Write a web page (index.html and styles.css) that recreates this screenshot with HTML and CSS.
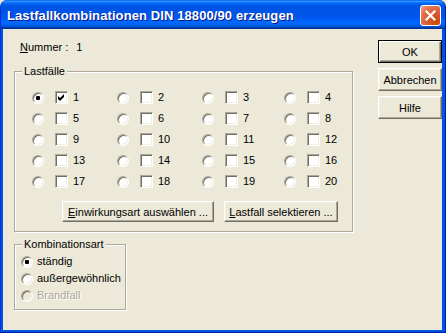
FILE: index.html
```html
<!DOCTYPE html>
<html lang="de">
<head>
    <meta charset="UTF-8">
    <title>Lastfallkombinationen DIN 18800/90 erzeugen</title>
    <link rel="stylesheet" href="styles.css">
</head>
<body>
    <div class="window">
        <div class="titlebar">
            <span class="title">Lastfallkombinationen DIN 18800/90 erzeugen</span>
            <span class="close">
                <svg width="11" height="11" viewBox="0 0 11 11">
                    <path d="M1.5 1.5 L9.5 9.5 M9.5 1.5 L1.5 9.5" stroke="#fff" stroke-width="2.2" stroke-linecap="square"/>
                </svg>
            </span>
        </div>

        <div class="client">
            <div class="main">
                <div class="nummer">
                    <span><u>N</u>ummer :</span>
                    <span class="nummer-value">1</span>
                </div>

                <div class="group lastfaelle">
                    <span class="group-title">Lastfälle</span>
                    <div class="lf-grid" id="lfGrid">
                        <!-- cells are filled in by the script below -->
                    </div>
                    <div class="lf-buttons">
                        <span class="btn btn-einw"><u>E</u>inwirkungsart auswählen ...</span>
                        <span class="btn btn-sel"><u>L</u>astfall selektieren ...</span>
                    </div>
                </div>

                <div class="group kombi">
                    <span class="group-title">Kombinationsart</span>
                    <div class="kombi-item"><span class="radio checked"></span>ständig</div>
                    <div class="kombi-item"><span class="radio"></span>außergewöhnlich</div>
                    <div class="kombi-item disabled"><span class="radio"></span>Brandfall</div>
                </div>
            </div>

            <div class="side">
                <span class="btn btn-default">OK</span>
                <span class="btn">Abbrechen</span>
                <span class="btn">Hilfe</span>
            </div>
        </div>
    </div>

    <script>
        var grid = document.getElementById("lfGrid");
        for (var i = 1; i <= 20; i++) {
            var cell = document.createElement("div");
            cell.className = "lf-cell";

            var radio = document.createElement("span");
            radio.className = i === 1 ? "radio checked" : "radio";

            var box = document.createElement("span");
            box.className = "check";
            if (i === 1) {
                box.innerHTML = '<svg width="7" height="7" viewBox="0 0 7 7"><path d="M0 2 L2 4 L6 0 L6 3 L2 7 L0 5 Z" fill="#000"/></svg>';
            }

            var label = document.createElement("span");
            label.className = "lf-num";
            label.textContent = i;

            cell.appendChild(radio);
            cell.appendChild(box);
            cell.appendChild(label);
            grid.appendChild(cell);
        }
    </script>
</body>
</html>
```

FILE: styles.css
```css
body {
    margin: 0;
    background-color: #ECE9D8;
    font-family: "Liberation Sans", Arial, sans-serif;
    font-size: 11px;
    color: #000;
}

.window {
    width: 446px;
    height: 333px;
    box-sizing: border-box;
    background-color: #0054E3;
    border-left: 1px solid #0831D9;
    border-right: 1px solid #001EA0;
    border-bottom: 1px solid #001EA0;
    border-radius: 7px 7px 0 0;
    display: flex;
    flex-direction: column;
    overflow: hidden;
}

/* title bar */
.titlebar {
    height: 29px;
    flex-shrink: 0;
    display: flex;
    align-items: center;
    justify-content: space-between;
    padding: 0 4px 0 6px;
    background: linear-gradient(to bottom, #0058EE 0%, #3593FF 4%, #288EFF 6%, #127DFF 8%, #036FFC 10%, #0262EE 14%, #0057E5 20%, #0054E3 24%, #0055EB 56%, #005BF5 66%, #026AFE 76%, #0062EF 86%, #0052D6 92%, #0040AB 94%, #003092 100%);
}

.title {
    color: #fff;
    font-weight: bold;
    font-size: 13px;
    letter-spacing: 0.1px;
    text-shadow: 1px 1px 0 #0A1883;
    margin-top: 1px;
}

.close {
    width: 21px;
    height: 21px;
    box-sizing: border-box;
    border: 1px solid #fff;
    border-radius: 3px;
    background: radial-gradient(circle at 80% 80%, #CC4602 0%, #D95A2F 40%, #E37352 70%, #F0A48A 100%);
    display: flex;
    align-items: center;
    justify-content: center;
    margin-top: 2px;
}

/* client area */
.client {
    flex: 1;
    display: flex;
    margin: 0 3px 2px 2px;
    background-color: #ECE9D8;
}

.main {
    width: 375px;
    padding-left: 11px;
    box-sizing: border-box;
}

.nummer {
    margin: 12px 0 0 6px;
    line-height: 13px;
    display: flex;
}

.nummer-value {
    margin-left: 8px;
}

/* group boxes */
.group {
    border: 1px solid #ACA899;
    box-shadow: inset 1px 1px 0 #fff, 1px 1px 0 #fff;
}

.group-title {
    display: block;
    width: fit-content;
    line-height: 13px;
    margin: -7px 0 0 7px;
    padding: 0 2px;
    background-color: #ECE9D8;
}

.lastfaelle {
    width: 339px;
    height: 161px;
    box-sizing: border-box;
    margin-top: 17px;
}

.lf-grid {
    display: grid;
    grid-template-columns: 85px 85px 82px auto;
    row-gap: 8px;
    margin: 13px 0 0 17px;
}

.lf-cell {
    display: flex;
    align-items: center;
    height: 13px;
}

.lf-num {
    margin-left: 5px;
    line-height: 13px;
}

.lf-buttons {
    display: flex;
    gap: 10px;
    margin: 13px 0 0 47px;
}

.btn-einw {
    width: 152px;
    height: 21px;
}

.btn-sel {
    width: 114px;
    height: 21px;
}

.kombi {
    width: 112px;
    height: 66px;
    box-sizing: border-box;
    margin-top: 12px;
}

.kombi-item {
    display: flex;
    align-items: center;
    height: 13px;
    margin: 4px 0 0 6px;
    line-height: 13px;
}

.kombi-item .radio {
    margin-right: 4px;
}

.kombi-item.disabled {
    color: #ACA899;
    text-shadow: 1px 1px 0 #fff;
}

.kombi-item.disabled .radio {
    background-color: #ECE9D8;
}

/* classic controls */
.radio {
    width: 12px;
    height: 12px;
    box-sizing: border-box;
    border-radius: 50%;
    border: 1px solid;
    border-color: #ACA899 #fff #fff #ACA899;
    box-shadow: inset 1px 1px 0 #716F64, inset -1px -1px 0 #F1EFE2;
    background-color: #fff;
    display: flex;
    align-items: center;
    justify-content: center;
    flex-shrink: 0;
    margin-right: 11px;
}

.radio.checked::after {
    content: "";
    width: 4px;
    height: 4px;
    border-radius: 1px;
    background-color: #000;
}

.check {
    width: 13px;
    height: 13px;
    box-sizing: border-box;
    border: 1px solid;
    border-color: #ACA899 #fff #fff #ACA899;
    box-shadow: inset 1px 1px 0 #716F64, inset -1px -1px 0 #F1EFE2;
    background-color: #fff;
    display: flex;
    align-items: center;
    justify-content: center;
    flex-shrink: 0;
}

.btn {
    display: flex;
    align-items: center;
    justify-content: center;
    box-sizing: border-box;
    background-color: #ECE9D8;
    border: 1px solid;
    border-color: #fff #716F64 #716F64 #fff;
    box-shadow: inset -1px -1px 0 #ACA899, inset 1px 1px 0 #F1EFE2;
    white-space: nowrap;
}

/* right button column */
.side {
    display: flex;
    flex-direction: column;
    gap: 5px;
    padding-top: 11px;
}

.side .btn {
    width: 64px;
    height: 23px;
}

.side .btn-default {
    border: 1px solid #000;
    box-shadow: inset 1px 1px 0 #fff, inset -1px -1px 0 #716F64, inset -2px -2px 0 #ACA899;
}
```
